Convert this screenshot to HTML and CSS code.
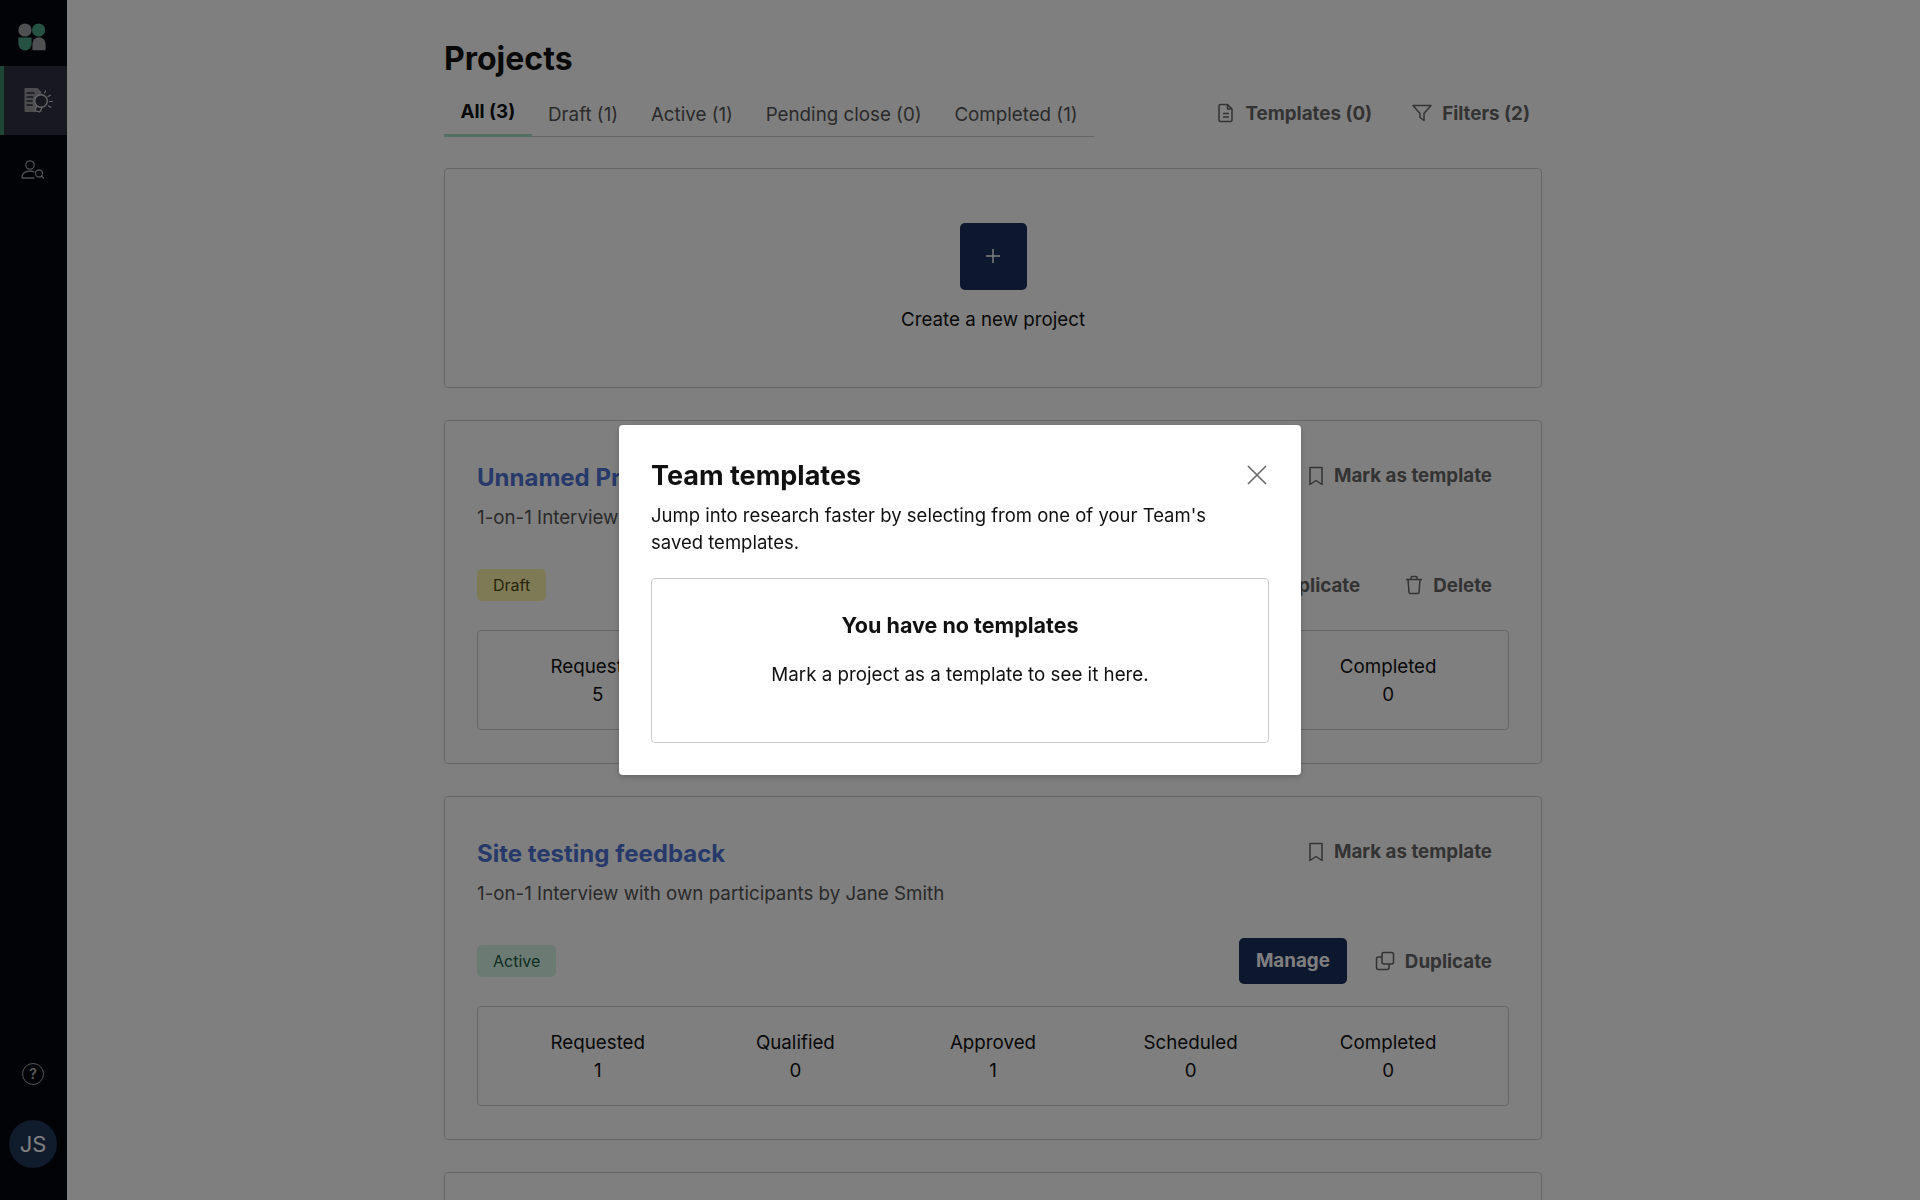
FILE: index.html
```html
<!DOCTYPE html>
<html lang="en">
<head>
  <meta charset="UTF-8" />
  <meta name="viewport" content="width=device-width, initial-scale=1.0" />
  <title>Projects</title>
  <link rel="stylesheet" href="styles.css">
</head>

<body>
  <nav class="sidebar">
    <div class="logo">
      <svg width="28" height="28" viewBox="0 0 28 28">
        <circle cx="7" cy="7" r="6.6" fill="#fff" opacity=".62" />
        <circle cx="20.6" cy="7" r="6.6" fill="#4ba584" />
        <path d="M.4 14.4h13.2v6.4a6.6 6.6 0 0 1-13.2 0z" fill="#4ba584" />
        <path d="M14.4 27.2v-6.4a6.6 6.6 0 0 1 13.2 0v6.4z" fill="#fff" opacity=".62" />
      </svg>
    </div>
    <a class="side-item active" href="#">
      <svg width="30" height="26" viewBox="0 0 30 26" fill="none">
        <path d="M2.500 1h12l4 4v19a1 1 0 0 1-1 1h-15a1 1 0 0 1-1-1V2a1 1 0 0 1 1-1z" fill="#9a9aa0" />
        <path d="M3.500 6h8M3.500 10h7M3.500 14h6M3.500 18h6" stroke="#2e3040" stroke-width="1.4" />
        <path d="M13.500 19l-1.500 4.500 4.500 1.500 2.500-4z" fill="#2e3040" stroke="#c8c8cc" stroke-width="1.300" stroke-linejoin="round" />
        <circle cx="18" cy="14" r="6.300" fill="#2e3040" stroke="#c8c8cc" stroke-width="1.400" />
        <path d="M21.500 6l1-2M25 9.500l2.500-1.300M26.500 14.500h3M25.500 19l2.300 1.300" stroke="#c8c8cc" stroke-width="1.200" stroke-linecap="round" />
      </svg>
    </a>
    <a class="side-item" href="#">
      <svg width="24" height="22" viewBox="0 0 24 22" fill="none" stroke="#fff" stroke-opacity=".6" stroke-width="1.3">
        <circle cx="9" cy="6" r="4.200" />
        <path d="M1 19c0-5 3-7 8-7 2 0 3 .3 4 1M1 19h12" stroke-linecap="round" />
        <circle cx="18" cy="14.500" r="3.500" />
        <path d="M20.500 17l2 2" stroke-linecap="round" />
      </svg>
    </a>
    <div class="side-bottom">
      <span class="help">?</span>
      <span class="avatar">JS</span>
    </div>
  </nav>

  <main class="content">
    <h1>Projects</h1>

    <div class="toolbar">
      <div class="tabs">
        <a class="tab current" href="#">All (3)</a>
        <a class="tab" href="#">Draft (1)</a>
        <a class="tab" href="#">Active (1)</a>
        <a class="tab" href="#">Pending close (0)</a>
        <a class="tab" href="#">Completed (1)</a>
      </div>
      <div class="tools">
        <a class="action" href="#">
          <svg class="icon" width="18" height="20" viewBox="0 0 18 20"><path d="M3.500 1.500h7l4.500 4.500v11a1.500 1.500 0 0 1-1.500 1.500h-10A1.500 1.500 0 0 1 2 17V3a1.500 1.500 0 0 1 1.500-1.500zM10.500 1.500V6H15M6 10.500h6M6 14h6" /></svg>
          Templates (0)
        </a>
        <a class="action" href="#">
          <svg class="icon" width="20" height="20" viewBox="0 0 20 20"><path d="M1 2.500h18l-7 8v7l-4-3v-4z" /></svg>
          Filters (2)
        </a>
      </div>
    </div>

    <section class="card create">
      <a class="plus" href="#">
        <svg width="18" height="18" viewBox="0 0 18 18"><path d="M9 2v14M2 9h14" stroke="#fff" stroke-width="1.500" /></svg>
      </a>
      <p>Create a new project</p>
    </section>

    <section class="card">
      <div class="row head">
        <a class="title" href="#">Unnamed Project</a>
        <a class="action" href="#">
          <svg class="icon" width="16" height="20" viewBox="0 0 16 20"><path d="M2 1.500h12v17l-6-4-6 4z" /></svg>
          Mark as template
        </a>
      </div>
      <p class="sub">1-on-1 Interview with own participants by Jane Smith</p>
      <div class="row meta">
        <span class="badge draft">Draft</span>
        <div class="buttons">
          <a class="btn" href="#">Manage</a>
          <a class="action" href="#">
            <svg class="icon" width="20" height="20" viewBox="0 0 20 20"><rect x="7" y="1.500" width="11.500" height="11.500" rx="2" /><path d="M7 6H3.500a2 2 0 0 0-2 2v8.500a2 2 0 0 0 2 2H12a2 2 0 0 0 2-2V13" /></svg>
            Duplicate
          </a>
          <a class="action" href="#">
            <svg class="icon" width="18" height="20" viewBox="0 0 18 20"><path d="M1 4.500h16M6 4.500V2.500a1 1 0 0 1 1-1h4a1 1 0 0 1 1 1v2M3 4.500l1 13a1.500 1.500 0 0 0 1.500 1h7a1.500 1.500 0 0 0 1.500-1l1-13" /></svg>
            Delete
          </a>
        </div>
      </div>
      <div class="stats">
        <div>Requested<br>5</div>
        <div>Qualified<br>0</div>
        <div>Approved<br>0</div>
        <div>Scheduled<br>0</div>
        <div>Completed<br>0</div>
      </div>
    </section>

    <section class="card">
      <div class="row head">
        <a class="title" href="#">Site testing feedback</a>
        <a class="action" href="#">
          <svg class="icon" width="16" height="20" viewBox="0 0 16 20"><path d="M2 1.500h12v17l-6-4-6 4z" /></svg>
          Mark as template
        </a>
      </div>
      <p class="sub">1-on-1 Interview with own participants by Jane Smith</p>
      <div class="row meta">
        <span class="badge active-badge">Active</span>
        <div class="buttons">
          <a class="btn" href="#">Manage</a>
          <a class="action" href="#">
            <svg class="icon" width="20" height="20" viewBox="0 0 20 20"><rect x="7" y="1.500" width="11.500" height="11.500" rx="2" /><path d="M7 6H3.500a2 2 0 0 0-2 2v8.500a2 2 0 0 0 2 2H12a2 2 0 0 0 2-2V13" /></svg>
            Duplicate
          </a>
        </div>
      </div>
      <div class="stats">
        <div>Requested<br>1</div>
        <div>Qualified<br>0</div>
        <div>Approved<br>1</div>
        <div>Scheduled<br>0</div>
        <div>Completed<br>0</div>
      </div>
    </section>

    <section class="card empty"></section>
  </main>

  <div class="overlay">
    <div class="modal">
      <div class="modal-head">
        <h2>Team templates</h2>
        <button class="close" aria-label="Close">
          <svg width="22" height="22" viewBox="0 0 22 22"><path d="M2 2l18 18M20 2L2 20" stroke="#666" stroke-width="1.600" /></svg>
        </button>
      </div>
      <p class="modal-text">Jump into research faster by selecting from one of your Team's saved templates.</p>
      <div class="no-templates">
        <h3>You have no templates</h3>
        <p>Mark a project as a template to see it here.</p>
      </div>
    </div>
  </div>
</body>
</html>
```

FILE: styles.css
```css
* {
  box-sizing: border-box;
}
body {
  margin: 0;
  height: 1200px;
  overflow: hidden;
  font-family: Inter, "Liberation Sans", sans-serif;
  font-size: 18.75px;
  line-height: 27px;
  color: #111;
  background: #fff;
  display: flex;
}
a {
  text-decoration: none;
  color: inherit;
}
p, h1, h2, h3 {
  margin: 0;
}

/* sidebar */
.sidebar {
  width: 67px;
  flex-shrink: 0;
  background: #04060f;
  display: flex;
  flex-direction: column;
  height: 1200px;
}
.logo {
  height: 66px;
  display: flex;
  align-items: center;
  justify-content: center;
  padding: 8px 3px 0 0;
}
.side-item {
  height: 69px;
  display: flex;
  align-items: center;
  justify-content: center;
  border-left: 4px solid transparent;
  padding-right: 5px;
}
.side-item.active {
  background: #2e3040;
  border-left-color: #3f8a6e;
  padding: 0 0 2px 4px;
}
.side-bottom {
  margin-top: auto;
  display: flex;
  flex-direction: column;
  align-items: center;
  gap: 35px;
  padding: 0 1px 32px 0;
}
.help {
  width: 22px;
  height: 22px;
  border: 1.5px solid rgba(255,255,255,.65);
  border-radius: 50%;
  color: rgba(255,255,255,.7);
  font-size: 14px;
  font-weight: 600;
  line-height: 19px;
  text-align: center;
}
.avatar {
  width: 48px;
  height: 48px;
  border-radius: 50%;
  background: #203658;
  color: #fff;
  font-size: 22px;
  line-height: 48px;
  text-align: center;
}

/* main column */
.content {
  flex-grow: 1;
  padding: 39px 1px 0 0;
}
.content > * {
  width: 1098px;
  margin-left: auto;
  margin-right: auto;
}
h1 {
  font-size: 32px;
  line-height: 40px;
  font-weight: 700;
  color: #111;
}
.toolbar {
  display: flex;
  justify-content: space-between;
  align-items: flex-start;
  margin-top: 13px;
  margin-bottom: 31px;
}
.tabs {
  display: flex;
  border-bottom: 1px solid #ccc;
  height: 45px;
}
.tab {
  height: 45px;
  padding: 9px 16.4px 0;
  color: #555;
}
.tab.current {
  color: #111;
  font-weight: 700;
  padding-top: 6px;
  border-bottom: 3px solid #a8e0c6;
}
.tools {
  display: flex;
  padding-top: 8px;
}
.action {
  display: flex;
  align-items: center;
  gap: 10px;
  padding: 0 12px 0 16px;
  font-weight: 700;
  color: #666;
  height: 26px;
  margin-left: 12px;
}
.icon {
  fill: none;
  stroke: #666;
  stroke-width: 1.5;
  stroke-linejoin: round;
  flex-shrink: 0;
}
.card {
  border: 1px solid #ccc;
  border-radius: 4px;
  padding: 32px;
  height: 344px;
  margin-bottom: 32px;
}
.create {
  height: 220px;
  padding-top: 53.5px;
  display: flex;
  flex-direction: column;
  align-items: center;
}
.create p {
  margin-top: 16px;
}
.plus {
  width: 67px;
  height: 67px;
  background: #1a2f5c;
  border-radius: 5px;
  display: flex;
  align-items: center;
  justify-content: center;
}
.row {
  display: flex;
  justify-content: space-between;
  align-items: center;
}
.head {
  height: 48px;
}
.head .action {
  padding-right: 17px;
  margin-bottom: 3px;
}
.title {
  font-size: 24px;
  font-weight: 700;
  color: #4f73d4;
}
.sub {
  margin-top: 3px;
  color: #555;
}
.meta {
  margin-top: 31px;
  height: 46px;
}
.badge {
  height: 32px;
  padding: 0 16px;
  border-radius: 5px;
  font-size: 16px;
  line-height: 32px;
}
.draft {
  background: #fff4ac;
  color: #4f4a10;
}
.active-badge {
  background: #d6f5e6;
  color: #1d5a43;
}
.buttons {
  display: flex;
  align-items: center;
}
.buttons .action {
  padding-right: 17px;
}
.btn {
  height: 46px;
  padding: 0 17px;
  border-radius: 5px;
  background: #1a2f5c;
  color: #fff;
  font-weight: 700;
  line-height: 46px;
}
.stats {
  margin-top: 22px;
  height: 100px;
  border: 1px solid #ccc;
  border-radius: 4px;
  padding: 22px 21px 0;
  display: grid;
  grid-template-columns: repeat(5, 1fr);
  text-align: center;
  line-height: 28px;
}
.empty {
  margin-bottom: 0;
}

/* modal */
.overlay {
  position: fixed;
  top: 0;
  left: 0;
  right: 0;
  bottom: 0;
  background: rgba(0,0,0,.5);
  display: flex;
  align-items: center;
  justify-content: center;
}
.modal {
  width: 682px;
  padding: 32px;
  background: #fff;
  border-radius: 4px;
  box-shadow: 0 2px 6px rgba(0,0,0,.2);
}
.modal-head {
  display: flex;
  justify-content: space-between;
  align-items: center;
  height: 36px;
}
.modal-head h2 {
  font-size: 27px;
  font-weight: 700;
  color: #111;
}
.close {
  border: none;
  background: none;
  padding: 0;
  margin-right: 1px;
  display: flex;
}
.modal-text {
  margin-top: 9px;
  font-size: 18.5px;
  max-width: 590px;
}
.no-templates {
  margin-top: 22px;
  height: 165px;
  border: 1px solid #ccc;
  border-radius: 4px;
  padding-top: 30px;
  text-align: center;
}
.no-templates h3 {
  font-size: 21.5px;
  line-height: 32px;
  font-weight: 700;
}
.no-templates p {
  margin-top: 20px;
}
```
